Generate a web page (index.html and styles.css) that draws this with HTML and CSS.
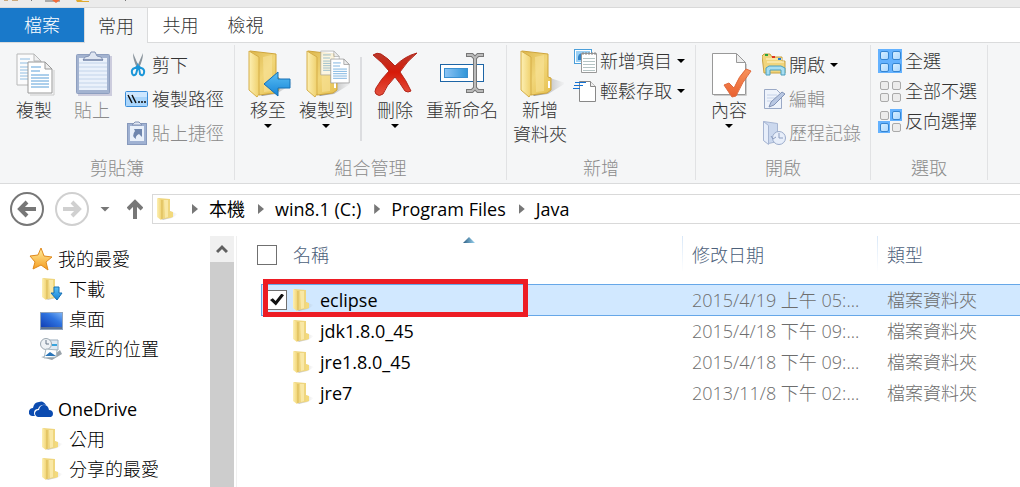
FILE: index.html
```
<!DOCTYPE html>
<html lang="zh-Hant">
<head>
  <meta charset="UTF-8">
  <meta name="viewport" content="width=device-width, initial-scale=1.0">
  <title>Java</title>
  <link rel="stylesheet" href="styles.css">
</head>
<body>

<!-- Shared gradients and icons -->
<svg class="sprite" width="0" height="0" aria-hidden="true">
  <defs>
    <linearGradient id="gold" x1="0" y1="0" x2="1" y2="1">
      <stop offset="0" stop-color="#dcb64c"/>
      <stop offset="0.5" stop-color="#f1d679"/>
      <stop offset="1" stop-color="#e6c04f"/>
    </linearGradient>
    <linearGradient id="flap" x1="0" y1="0" x2="1" y2="0">
      <stop offset="0" stop-color="#fdf0b4"/>
      <stop offset="1" stop-color="#efd06c"/>
    </linearGradient>
    <linearGradient id="shade" x1="0" y1="0" x2="1" y2="0">
      <stop offset="0" stop-color="#666" stop-opacity="0.8"/>
      <stop offset="1" stop-color="#999" stop-opacity="0"/>
    </linearGradient>
    <linearGradient id="blue" x1="0" y1="0" x2="0" y2="1">
      <stop offset="0" stop-color="#5cc0f5"/>
      <stop offset="1" stop-color="#1583d6"/>
    </linearGradient>
    <linearGradient id="field" x1="0" y1="0" x2="1" y2="0">
      <stop offset="0" stop-color="#8fc5f5"/>
      <stop offset="1" stop-color="#2f95d8"/>
    </linearGradient>
    <linearGradient id="screen" x1="0" y1="1" x2="1" y2="0">
      <stop offset="0" stop-color="#123fb5"/>
      <stop offset="0.6" stop-color="#2f74e0"/>
      <stop offset="1" stop-color="#78b0f4"/>
    </linearGradient>
    <linearGradient id="star" x1="0" y1="0" x2="0" y2="1">
      <stop offset="0" stop-color="#fff0a0"/>
      <stop offset="1" stop-color="#f59a1c"/>
    </linearGradient>
    <linearGradient id="pick" x1="0" y1="0" x2="1" y2="1">
      <stop offset="0" stop-color="#d9efff"/>
      <stop offset="1" stop-color="#a9d6ff"/>
    </linearGradient>
    <linearGradient id="red" x1="0" y1="0" x2="0" y2="1">
      <stop offset="0" stop-color="#b93a2c"/>
      <stop offset="0.45" stop-color="#d61a08"/>
      <stop offset="1" stop-color="#e5523f"/>
    </linearGradient>
    <linearGradient id="tick" x1="0" y1="0" x2="0" y2="1">
      <stop offset="0" stop-color="#f7935c"/>
      <stop offset="1" stop-color="#e9602f"/>
    </linearGradient>

    <symbol id="folder" viewBox="0 0 48 48">
      <path d="M34 28 L50 33 L32 44 L17 46Z" fill="url(#shade)"/>
      <path d="M6 1 L32 4 V27 L35 28 V40 L31 43 L15 45Z" fill="url(#gold)" stroke="#cfa53c" stroke-width="1"/>
      <path d="M19 7 L28 5 V41 L20 42Z" fill="#f8e399" opacity="0.6"/>
      <path d="M5 1 L15 7 V44 L13 47 L5 40Z" fill="url(#flap)" stroke="#d5ae48" stroke-width="1"/>
      <path d="M33 31v7" stroke="#fff" stroke-width="2"/>
    </symbol>
    <symbol id="folder-small" viewBox="0 0 24 24">
      <path d="M14 14 L23 17 L17 21 L7 23Z" fill="url(#shade)" opacity="0.6"/>
      <path d="M3 1 L15 2 V14 L18 15 V20 L15 21 L7 22Z" fill="#efd67e"/>
      <path d="M9 3 L13 3 V20 L10 21Z" fill="#f9e8a6"/>
      <path d="M15 15 L18 15 V20 L15 20Z" fill="#f3da7c"/>
      <path d="M2 1 L7 3 V22 L6 23 L2 20Z" fill="url(#flap)"/>
      <path d="M7 3V22" stroke="#d9b856"/>
    </symbol>
    <symbol id="page" viewBox="0 0 26 33">
      <path d="M1 1H18L25 8V32H1Z" fill="#fff" stroke="#999"/>
      <path d="M18 1V8H25Z" fill="#eee" stroke="#999"/>
      <path d="M4 6h10M4 10h9M4 14h18M4 17h18M4 20h18M4 23h18M4 26h18" stroke="#5b9fd8"/>
    </symbol>
    <symbol id="cell-off" viewBox="0 0 12 12">
      <rect x="2.500" y="2.500" width="8" height="8" rx="1.500" fill="#ececec" stroke="#aaa"/>
    </symbol>
    <symbol id="cell-on" viewBox="0 0 12 12">
      <rect width="12" height="12" fill="#64b2ff"/>
      <rect x="2.500" y="2.500" width="8" height="8" rx="1.500" fill="url(#pick)" stroke="#3585d2"/>
    </symbol>
  </defs>
</svg>

<header class="titlebar">
  <svg width="140" height="4" viewBox="0 0 140 4" aria-hidden="true">
    <path d="M4 0h4v1H4zM12 0h6v1h-6z" fill="#caa97c"/>
    <path d="M31 0h1v1h-1zM125 0h1v1h-1z" fill="#777"/>
    <path d="M45 0h15v2H45z" fill="#aaa"/>
    <path d="M52 0h8l-4 3z" fill="#f26b3a"/>
    <path d="M76 0h5l2 1h6v1H77z" fill="#e0a92e"/>
  </svg>
</header>

<nav class="tabs">
  <button class="tab file">檔案</button>
  <button class="tab active">常用</button>
  <button class="tab">共用</button>
  <button class="tab">檢視</button>
</nav>

<section class="ribbon">
  <div class="group clipboard">
    <div class="tools">
      <button class="large">
        <svg width="48" height="48" viewBox="0 0 48 48">
          <g opacity="0.65"><use href="#page" x="6" y="3" width="26" height="33"/></g>
          <path d="M20 45H44V20" fill="none" stroke="#ccc"/>
          <use href="#page" x="17" y="11" width="26" height="33"/>
        </svg>
        <span>複製</span>
      </button>
      <button class="large" disabled>
        <svg width="48" height="48" viewBox="0 0 48 48">
          <rect x="10" y="6" width="34" height="40" fill="#ccd"/>
          <rect x="8.500" y="4.500" width="33" height="39" rx="1" fill="#a3b3d0" stroke="#8e9fc0"/>
          <rect x="11" y="8" width="28" height="32" fill="#eaf1fb"/>
          <path d="M11 13h28M11 17h28M11 21h28M11 25h28M11 29h28M11 33h28M11 37h28" stroke="#c3d4ea"/>
          <path d="M15 10 Q16 6 21 6 L23 2H27L29 6Q34 6 35 10Z" fill="#dfe6f2" stroke="#8393b4"/>
          <path d="M15 10h20" stroke="#65779d"/>
        </svg>
        <span>貼上</span>
      </button>
      <div class="stack">
        <button class="small">
          <svg width="24" height="24" viewBox="0 0 24 24">
            <path d="M8 0L14 14L12 15Q8 7 8 0ZM18 0L12 14L14 15Q18 7 18 0Z" fill="#8a949c"/>
            <path d="M13 13L10 15Q6 16 7 20Q8 24 11 21Q12 18 13 13Q15 18 15 21Q18 24 19 20Q20 16 16 15Z" fill="none" stroke="#1b96d8" stroke-width="2"/>
          </svg>
          <span>剪下</span>
        </button>
        <button class="small">
          <svg width="24" height="24" viewBox="0 0 24 24">
            <rect x="0.500" y="4.500" width="22" height="15" rx="1" fill="#a9d5fb" stroke="#3c8ed9"/>
            <path d="M1 5h21v5H1z" fill="#cde7ff"/>
            <path d="M3 8l4 8M7 8l4 8M13 15h2M16 15h2M19 15h2" stroke="#111" stroke-width="1.500"/>
          </svg>
          <span>複製路徑</span>
        </button>
        <button class="small" disabled>
          <svg width="24" height="24" viewBox="0 0 24 24">
            <rect x="2.500" y="2.500" width="19" height="21" fill="#9fb1d2" stroke="#8799bc"/>
            <path d="M5 5h14v15H5z" fill="#e9f0fa"/>
            <path d="M7 4L10 1h4l3 3z" fill="#dfe6f2" stroke="#8393b4"/>
            <path d="M9 8h8v8l-3-3q-4 2-3 5q-5-3-1-8z" fill="#6f86ae"/>
          </svg>
          <span>貼上捷徑</span>
        </button>
      </div>
    </div>
    <div class="caption">剪貼簿</div>
  </div>

  <div class="group organize">
    <div class="tools">
      <button class="large">
        <svg width="48" height="48" viewBox="0 0 48 48">
          <use href="#folder" width="48" height="48"/>
          <path d="M20 34L34 22V29H46V38H34V46Z" fill="url(#blue)" stroke="#1670b5"/>
        </svg>
        <span>移至</span>
        <i class="arrow"></i>
      </button>
      <button class="large">
        <svg width="48" height="48" viewBox="0 0 48 48">
          <use href="#folder" width="48" height="48"/>
          <g opacity="0.75"><use href="#page" x="18" y="0" width="20" height="26"/></g>
          <use href="#page" x="28" y="8" width="20" height="26"/>
        </svg>
        <span>複製到</span>
        <i class="arrow"></i>
      </button>
      <hr class="divider">
      <button class="large">
        <svg width="48" height="48" viewBox="0 0 48 48">
          <path d="M2 5Q6 2 10 4Q17 8 24 16Q34 6 46 3Q36 11 29 22Q35 30 40 41Q37 43 34 41Q29 33 24 27Q15 36 12 44Q8 47 5 44Q3 42 5 38Q10 29 18 21Q11 12 2 5Z" fill="url(#red)" stroke="#b3261a"/>
        </svg>
        <span>刪除</span>
        <i class="arrow"></i>
      </button>
      <button class="large wide">
        <svg width="48" height="48" viewBox="0 0 48 48">
          <rect x="2.500" y="14.500" width="43" height="17" fill="#fff" stroke="#1d65a6"/>
          <rect x="6.500" y="18.500" width="23" height="9" fill="url(#field)" stroke="#3a8fd0"/>
          <path d="M28 5h6l3 3l3-3h6M37 8v31M28 41h6l3-3l3 3h6" fill="none" stroke="#777" stroke-width="4"/>
          <path d="M29 5h5l3 3l3-3h5M37 8v31M29 41h5l3-3l3 3h5" fill="none" stroke="#bbb" stroke-width="2"/>
        </svg>
        <span>重新命名</span>
      </button>
    </div>
    <div class="caption">組合管理</div>
  </div>

  <div class="group new">
    <div class="tools">
      <button class="large mid">
        <svg width="48" height="48"><use href="#folder"/></svg>
        <span>新增<br>資料夾</span>
      </button>
      <div class="stack tight">
        <button class="small">
          <svg width="24" height="24" viewBox="0 0 24 24">
            <rect x="1.500" y="0.500" width="17" height="14" fill="#fff" stroke="#4b9fda"/>
            <path d="M3 2h14v11H3z" fill="#9bd0f4"/>
            <path d="M5 11q-1-7 5-7q5 0 4 7z" fill="#3484c6"/>
            <path d="M8.500 4.500h15v19h-15z" fill="#fff" stroke="#999"/>
            <path d="M10 3v3M13 3v3M16 3v3M19 3v3M22 3v3" stroke="#888"/>
            <path d="M10 9.500h12M10 12.500h12M10 15.500h12M10 18.500h12M10 21.500h12" stroke="#b5c4c4"/>
          </svg>
          <span>新增項目</span>
          <i class="arrow"></i>
        </button>
        <button class="small">
          <svg width="24" height="24" viewBox="0 0 24 24">
            <path d="M6.500 2.500h11l5 5v15h-16z" fill="#fff" stroke="#888"/>
            <path d="M17.500 2.500v5h5" fill="#eee" stroke="#888"/>
            <path d="M2 3.500h11M1 6.500h9M0 9.500h7" stroke="#1572d3"/>
          </svg>
          <span>輕鬆存取</span>
          <i class="arrow"></i>
        </button>
      </div>
    </div>
    <div class="caption">新增</div>
  </div>

  <div class="group open">
    <div class="tools">
      <button class="large mid">
        <svg width="48" height="48" viewBox="0 0 48 48">
          <path d="M9 45.500H41.500V14" fill="none" stroke="#ccc"/>
          <path d="M7.500 3.500H31L40.500 13V44.500H7.500Z" fill="#fff" stroke="#999"/>
          <path d="M31.500 3.500V12.500H40.500Z" fill="#eee" stroke="#999"/>
          <path d="M19 35L24 33L29 38Q34 26 41 19L46 21Q37 32 31 46L27 47Z" fill="url(#tick)" stroke="#e0693c"/>
        </svg>
        <span>內容</span>
        <i class="arrow"></i>
      </button>
      <div class="stack">
        <button class="small">
          <svg width="24" height="24" viewBox="0 0 24 24">
            <path d="M0 3l2-2h6l2 3h10v4h3v12H2z" fill="#f1d57c" stroke="#c9a243"/>
            <path d="M4 6h16M5 9h17" stroke="#fff7d0"/>
            <path d="M3 2h3" stroke="#29a33b" stroke-width="2"/>
            <path d="M10 4h3" stroke="#dd3322" stroke-width="2"/>
            <path d="M16 6h3" stroke="#257bd1" stroke-width="2"/>
            <path d="M4 22V15l3-2h12l4 2v7h-4v-5H8v5z" fill="#a7def2" stroke="#4c9fbe"/>
          </svg>
          <span>開啟</span>
          <i class="arrow"></i>
        </button>
        <button class="small" disabled>
          <svg width="24" height="24" viewBox="0 0 24 24">
            <path d="M2.500 2.500h12l5 5v14h-17z" fill="#eef3fb" stroke="#9aa9c6"/>
            <path d="M5 8h10M5 11h10M5 14h6" stroke="#c5d2e8"/>
            <path d="M7 20l2-5L20 5l3 2L12 18z" fill="#b8c7e2" stroke="#8193b6"/>
          </svg>
          <span>編輯</span>
        </button>
        <button class="small" disabled>
          <svg width="24" height="24" viewBox="0 0 24 24">
            <path d="M1.500 0.500l14 2v18l-9 2l-5-3z" fill="#cbd8ee" stroke="#a6b5d2"/>
            <path d="M1.500 0.500l5 4v19l-5-4z" fill="#e7eefa" stroke="#a6b5d2"/>
            <circle cx="17" cy="17" r="6.500" fill="#e7eefa" stroke="#9aabca"/>
            <path d="M17 12v5h4M9 15l2 3l3-2" fill="none" stroke="#8b9cbf"/>
          </svg>
          <span>歷程記錄</span>
        </button>
      </div>
    </div>
    <div class="caption">開啟</div>
  </div>

  <div class="group select">
    <div class="tools">
      <div class="stack tight">
        <button class="small">
          <svg width="24" height="24">
            <use href="#cell-on" width="12" height="12"/>
            <use href="#cell-on" x="12" width="12" height="12"/>
            <use href="#cell-on" y="12" width="12" height="12"/>
            <use href="#cell-on" x="12" y="12" width="12" height="12"/>
          </svg>
          <span>全選</span>
        </button>
        <button class="small">
          <svg width="24" height="24">
            <use href="#cell-off" width="12" height="12"/>
            <use href="#cell-off" x="12" width="12" height="12"/>
            <use href="#cell-off" y="12" width="12" height="12"/>
            <use href="#cell-off" x="12" y="12" width="12" height="12"/>
          </svg>
          <span>全部不選</span>
        </button>
        <button class="small">
          <svg width="24" height="24">
            <use href="#cell-off" width="12" height="12"/>
            <use href="#cell-on" x="12" width="12" height="12"/>
            <use href="#cell-on" y="12" width="12" height="12"/>
            <use href="#cell-off" x="12" y="12" width="12" height="12"/>
          </svg>
          <span>反向選擇</span>
        </button>
      </div>
    </div>
    <div class="caption">選取</div>
  </div>
</section>

<nav class="location">
  <button class="nav-button" aria-label="上一頁">
    <svg width="34" height="34" viewBox="0 0 34 34" fill="none" stroke="#777">
      <circle cx="17" cy="17" r="16" stroke-width="2"/>
      <path d="M26 17H10M17 10L10 17L17 24" stroke-width="4"/>
    </svg>
  </button>
  <button class="nav-button" aria-label="下一頁" disabled>
    <svg width="34" height="34" viewBox="0 0 34 34" fill="none" stroke="#d0d0d0">
      <circle cx="17" cy="17" r="16" stroke-width="2"/>
      <path d="M8 17H24M17 10L24 17L17 24" stroke-width="4"/>
    </svg>
  </button>
  <button class="nav-button" aria-label="最近的位置"><i class="arrow gray"></i></button>
  <button class="nav-button up" aria-label="上移">
    <svg width="16" height="20" viewBox="0 0 16 20" fill="none" stroke="#777" stroke-width="4">
      <path d="M8 20V3M1 10L8 3L15 10"/>
    </svg>
  </button>
  <div class="address">
    <svg width="24" height="24"><use href="#folder-small"/></svg>
    <i class="chevron"></i><a href="#">本機</a>
    <i class="chevron"></i><a href="#">win8.1 (C:)</a>
    <i class="chevron"></i><a href="#">Program Files</a>
    <i class="chevron"></i><a href="#">Java</a>
  </div>
</nav>

<main class="content">
  <aside class="tree">
    <a href="#" class="root">
      <svg width="24" height="24" viewBox="0 0 24 24">
        <path d="M12 1L15 9L23 10L17 15L19 23L12 18L4 22L6 15L1 9L9 8Z" fill="url(#star)" stroke="#e08a1e"/>
      </svg>
      <span>我的最愛</span>
    </a>
    <a href="#">
      <svg width="24" height="24" viewBox="0 0 24 24">
        <use href="#folder-small" width="24" height="24"/>
        <path d="M14 10h5v6h3l-5 7l-6-7h3z" fill="url(#blue)" stroke="#1670b5"/>
      </svg>
      <span>下載</span>
    </a>
    <a href="#">
      <svg width="24" height="24" viewBox="0 0 24 24">
        <path d="M0 5h23v18H0z" fill="#8fa3bd"/>
        <path d="M1 6h21v14H1z" fill="url(#screen)"/>
        <path d="M1 21h21" stroke="#2c4468"/>
      </svg>
      <span>桌面</span>
    </a>
    <a href="#">
      <svg width="24" height="24" viewBox="0 0 24 24">
        <path d="M9 3h9v10H7z" fill="#dfe9f3" stroke="#9ab"/>
        <path d="M1 20l14-3l5-4l2 4l-10 6z" fill="#9aa3aa"/>
        <circle cx="6" cy="7" r="5.500" fill="#eef2f5" stroke="#9aa6b0"/>
        <path d="M6 3v4h3" fill="none" stroke="#678"/>
        <path d="M6 12l11 1l-1 7l-12 1z" fill="#fff" stroke="#a8b8c0"/>
        <path d="M5 19l5-4l6 4z" fill="#2a75b8"/>
        <path d="M12 8h5" stroke="#39a3dc" stroke-width="2"/>
      </svg>
      <span>最近的位置</span>
    </a>
    <a href="#" class="root drive">
      <svg width="24" height="24" viewBox="0 0 24 24">
        <path d="M3 19Q-1 18 0 14Q1 11 4 11Q5 5 10 5Q14 3 17 8Q11 7 9 12Q5 12 5 16Q5 18 6 19Z" fill="#0b4bb0"/>
        <path d="M9 20Q6 19 6 16Q7 13 10 13Q11 8 15 8Q19 8 20 13Q24 13 24 17Q24 19 22 20Z" fill="#0b4bb0"/>
      </svg>
      <span>OneDrive</span>
    </a>
    <a href="#">
      <svg width="24" height="24"><use href="#folder-small"/></svg>
      <span>公用</span>
    </a>
    <a href="#">
      <svg width="24" height="24"><use href="#folder-small"/></svg>
      <span>分享的最愛</span>
    </a>
  </aside>

  <div class="scrollbar">
    <button aria-label="向上捲動">
      <svg width="12" height="10" viewBox="0 0 12 10" fill="none" stroke="#606060" stroke-width="3">
        <path d="M1 8L6 3L11 8"/>
      </svg>
    </button>
  </div>

  <div class="files">
    <table>
      <thead>
        <tr>
          <th class="name">
            <div class="cell">
              <input type="checkbox" class="all" aria-label="全選">
              <span>名稱</span>
            </div>
            <i class="sort"></i>
          </th>
          <th class="date">修改日期</th>
          <th>類型</th>
        </tr>
      </thead>
      <tbody>
        <tr class="selected">
          <td class="name">
            <div class="cell">
              <input type="checkbox" aria-label="eclipse" checked>
              <svg width="24" height="24"><use href="#folder-small"/></svg>
              <span>eclipse</span>
            </div>
            <div class="mark"></div>
          </td>
          <td>2015/4/19 上午 05:...</td>
          <td>檔案資料夾</td>
        </tr>
        <tr>
          <td class="name"><div class="cell"><svg width="24" height="24"><use href="#folder-small"/></svg><span>jdk1.8.0_45</span></div></td>
          <td>2015/4/18 下午 09:...</td>
          <td>檔案資料夾</td>
        </tr>
        <tr>
          <td class="name"><div class="cell"><svg width="24" height="24"><use href="#folder-small"/></svg><span>jre1.8.0_45</span></div></td>
          <td>2015/4/18 下午 09:...</td>
          <td>檔案資料夾</td>
        </tr>
        <tr>
          <td class="name"><div class="cell"><svg width="24" height="24"><use href="#folder-small"/></svg><span>jre7</span></div></td>
          <td>2013/11/8 下午 02:...</td>
          <td>檔案資料夾</td>
        </tr>
      </tbody>
    </table>
  </div>
</main>

</body>
</html>
```

FILE: styles.css
```
* {
  box-sizing: border-box;
}

body {
  margin: 0;
  min-height: 100vh;
  display: flex;
  flex-direction: column;
  background: #fff;
  color: #000;
  font-family: "Open Sans", "Noto Sans CJK TC", sans-serif;
  font-size: 18px;
  font-weight: 300;
  line-height: 24px;
  white-space: nowrap;
  overflow: hidden;
}

.sprite {
  position: absolute;
}

svg {
  display: block;
  flex: none;
}

button {
  padding: 0;
  border: 0;
  background: none;
  color: #333;
  font: inherit;
}

button:disabled {
  color: #8b8b8b;
}

a {
  color: #000;
  text-decoration: none;
}

/* Small triangle for drop-down buttons */
.arrow {
  width: 8px;
  height: 4px;
  background: #000;
  clip-path: polygon(0 0, 100% 0, 50% 100%);
}

.large .arrow {
  margin-top: 2px;
}

.arrow.gray {
  width: 10px;
  height: 5px;
  background: #777;
}

.titlebar {
  height: 8px;
  background: #ebebeb;
  border-bottom: 1px solid #d9d9d9;
}

/* Ribbon tabs */
.tabs {
  display: flex;
  height: 35px;
  border-bottom: 1px solid #dadbdc;
}

.tab {
  width: 65px;
  height: 34px;
}

.tab.file {
  width: 84px;
  background: #1979ca;
  color: #fff;
}

.tab.active {
  width: 64px;
  height: 35px;
  background: #f5f6f7;
  border: 1px solid #dadbdc;
  border-width: 0 1px;
}

/* Ribbon groups */
.ribbon {
  display: flex;
  height: 141px;
  padding: 2px 0 3px;
  background: #f5f6f7;
  border-bottom: 1px solid #dadbdc;
}

.group {
  display: flex;
  flex-direction: column;
  justify-content: space-between;
  border-right: 1px solid #e1e2e4;
}

.clipboard {
  width: 235px;
}

.clipboard .tools {
  padding-left: 5px;
}

.organize {
  width: 272px;
}

.organize .tools {
  padding-left: 4px;
}

.new {
  width: 189px;
}

.open {
  width: 175px;
}

.select {
  width: 117px;
}

.select .tools {
  padding-left: 7px;
}

.tools {
  display: flex;
  align-items: flex-start;
}

.caption {
  color: #8b8b8b;
  text-align: center;
}

.large {
  display: flex;
  flex-direction: column;
  align-items: center;
  width: 58px;
  padding-top: 5px;
}

.large.mid {
  width: 66px;
}

.large.wide {
  width: 76px;
}

.divider {
  width: 2px;
  height: 84px;
  margin: 12px 4px 0 5px;
  border: 0;
  background: #dcdde0;
}

.stack {
  display: flex;
  flex-direction: column;
  padding-top: 3px;
}

.clipboard .stack {
  padding-left: 4px;
}

.small {
  display: flex;
  align-items: center;
  gap: 3px;
  height: 34px;
}

.small .arrow {
  margin-left: 2px;
}

.stack.tight {
  padding-top: 1px;
}

.tight .small {
  height: 30px;
}

/* Address row */
.location {
  display: flex;
  align-items: center;
  height: 52px;
  padding: 0 0 2px 10px;
}

.nav-button {
  display: flex;
  margin-right: 11px;
}

.nav-button.up {
  margin: 0 9px 0 6px;
}

.address {
  flex: 1;
  display: flex;
  align-items: center;
  height: 30px;
  padding-left: 2px;
  border: 1px solid #d9d9d9;
  border-right: 0;
}

.address a {
  font-weight: 400;
}

.chevron {
  width: 6px;
  height: 10px;
  margin: 0 11px 0 13px;
  background: #777;
  clip-path: polygon(0 0, 100% 50%, 0 100%);
}

/* Folder tree, scroll bar, file list */
.content {
  flex: 1;
  display: grid;
  grid-template-columns: 210px 24px 1fr;
}

.tree {
  padding-top: 8px;
}

.tree a {
  display: flex;
  align-items: center;
  gap: 5px;
  height: 30px;
  padding-left: 40px;
}

.tree .root {
  padding-left: 29px;
}

.tree .drive {
  margin-top: 30px;
  font-weight: 400;
}

.scrollbar {
  background: #cdcdcd;
}

.scrollbar button {
  display: flex;
  align-items: center;
  justify-content: center;
  width: 100%;
  height: 26px;
  background: #f0f0f0;
}

.files {
  margin-left: 2px;
  padding-left: 24px;
  border-left: 1px solid #f0f0f0;
}

table {
  width: 100%;
  table-layout: fixed;
  border-spacing: 0;
}

th {
  height: 48px;
  padding: 0 0 10px 10px;
  background: linear-gradient(#d9e8f8, #fff) no-repeat left top / 1px 36px;
  color: #4c607a;
  font-weight: 300;
  text-align: left;
}

td {
  height: 31px;
  padding: 0 0 1px 10px;
  color: #6d6d6d;
}

.name {
  position: relative;
  width: 421px;
  padding-left: 0;
  color: #000;
}

th.name {
  background: none;
  color: #4c607a;
}

td.name {
  font-weight: 400;
}

.date {
  width: 195px;
}

.cell {
  display: flex;
  align-items: center;
  gap: 5px;
  padding-left: 30px;
}

th .cell {
  gap: 16px;
  padding-left: 0;
}

.selected td {
  height: 32px;
  background: #d1e8ff;
  border: 1px solid #66a7e8;
  border-width: 1px 0;
}

.selected .name {
  border-left-width: 1px;
}

.selected .cell {
  padding-left: 5px;
}

.selected input {
  margin-right: -1px;
}

input {
  appearance: none;
  display: grid;
  place-items: center;
  width: 20px;
  height: 20px;
  margin: 0;
  background: #fff;
  border: 1px solid #707070;
}

input.all {
  margin-left: -4px;
}

input:checked::before {
  content: "";
  width: 14px;
  height: 12px;
  background: #111;
  clip-path: polygon(0 55%, 20% 40%, 40% 62%, 82% 0, 100% 14%, 42% 100%);
}

.sort {
  position: absolute;
  top: 1px;
  left: 202px;
  width: 12px;
  height: 6px;
  background: linear-gradient(90deg, #2c5d82, #9ad4f0);
  clip-path: polygon(50% 0, 100% 100%, 0 100%);
}

/* Red frame round the chosen folder */
.mark {
  position: absolute;
  top: -6px;
  left: 1px;
  width: 265px;
  height: 38px;
  border: 5px solid #ed1c24;
}
```
